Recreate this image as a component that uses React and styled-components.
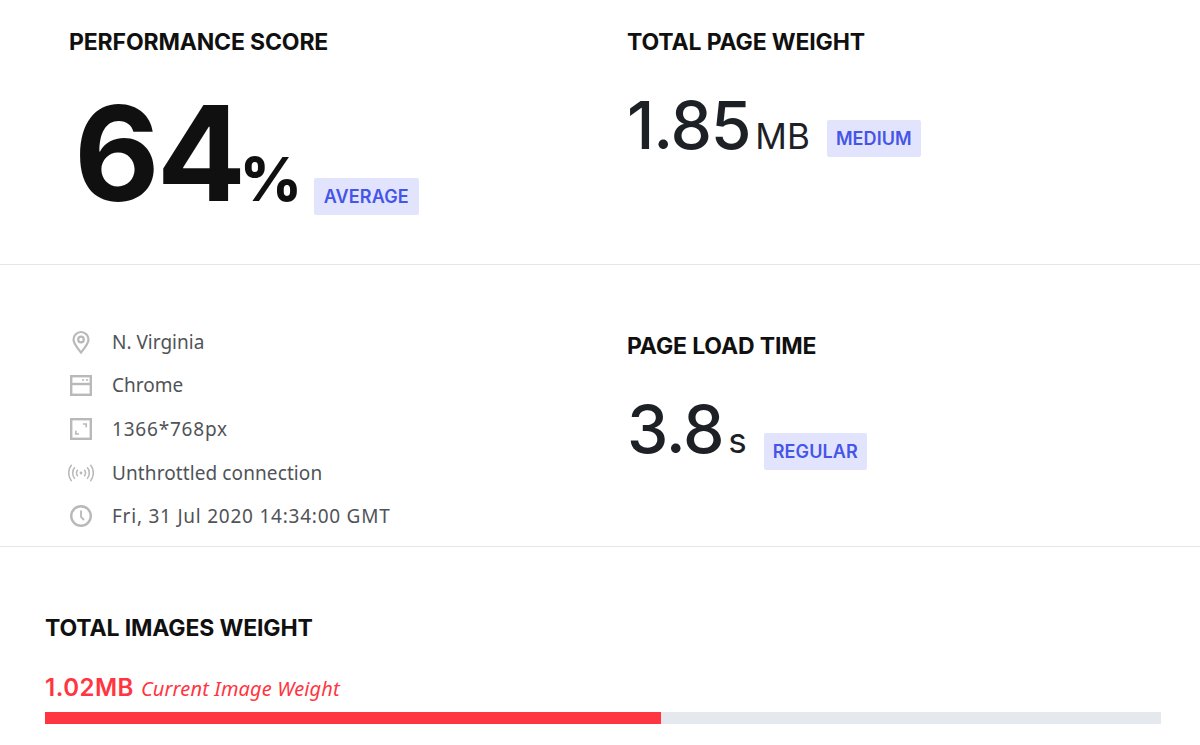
import React from 'react';
import styled, { createGlobalStyle } from 'styled-components';

const GlobalStyle = createGlobalStyle`
  html, body {
    margin: 0;
    padding: 0;
    background: #fff;
  }
  body {
    font-family: "Noto Sans", "Liberation Sans", sans-serif;
    overflow: hidden;
  }
`;

const COLORS = {
  HEADING: '#101010',
  VALUE: '#1d2126',
  ICON: '#b9b9b9',
  TEXT: '#505357',
  RED: '#ff3541',
  TRACK: '#e5e8ec',
  BADGE_BG: '#e2e4fd',
  BADGE_TEXT: '#4555e8',
};

const Page = styled.div`
  width: 1200px;
  height: 745px;
  overflow: hidden;
`;

const Row = styled.section`
  display: grid;
  grid-template-columns: 627px 1fr;
  height: ${(p) => p.$height}px;
  box-sizing: border-box;
  border-bottom: 1px solid #e4e6e8;
`;

const Cell = styled.div`
  padding: ${(p) => p.$top}px 0 0 ${(p) => p.$left || 0}px;
`;

const Title = styled.h2`
  margin: 0;
  font-family: Inter, "Liberation Sans", sans-serif;
  font-weight: 700;
  font-size: 23px;
  line-height: 28px;
  letter-spacing: -0.15px;
  color: ${COLORS.HEADING};
  white-space: nowrap;
`;

const Metric = styled.div`
  display: flex;
  align-items: flex-end;
  margin-top: ${(p) => p.$top}px;
  margin-left: ${(p) => p.$shift || 0}px;
  font-family: Inter, "Liberation Sans", sans-serif;
  color: ${COLORS.VALUE};
`;

const ValueGroup = styled.span`
  display: flex;
  align-items: baseline;
`;

const BigValue = styled.span`
  font-weight: 700;
  font-size: 132px;
  line-height: 114px;
  letter-spacing: -3px;
  color: ${COLORS.HEADING};
`;

const BigUnit = styled.span`
  font-weight: 800;
  font-size: 60px;
  margin-left: -3px;
  letter-spacing: -2px;
  color: ${COLORS.HEADING};
`;

const Value = styled.span`
  font-weight: 500;
  font-size: 66px;
  line-height: ${(p) => p.$line}px;
  letter-spacing: -1.2px;
`;

const Unit = styled.span`
  font-weight: 400;
  font-size: 35px;
  margin-left: 5px;
`;

const Badge = styled.span`
  display: inline-flex;
  align-items: center;
  height: 37px;
  padding: 0 ${(p) => p.$pad || 9}px;
  margin-left: ${(p) => p.$gap}px;
  border-radius: 2px;
  background: ${COLORS.BADGE_BG};
  color: ${COLORS.BADGE_TEXT};
  font-family: Inter, "Liberation Sans", sans-serif;
  font-weight: 600;
  font-size: 18px;
  letter-spacing: 0.1px;
`;

const InfoList = styled.ul`
  list-style: none;
  margin: 0;
  padding: 0;
  display: flex;
  flex-direction: column;
  gap: 14px;
`;

const InfoItem = styled.li`
  display: flex;
  align-items: center;
  height: 29.6px;
  font-size: 19px;
  letter-spacing: ${(p) => p.$track || 0}px;
  color: ${COLORS.TEXT};
  white-space: nowrap;
`;

const IconSlot = styled.span`
  display: flex;
  justify-content: center;
  align-items: center;
  width: 26px;
  margin-right: 18px;
  color: ${COLORS.ICON};
`;

const ImagesRow = styled.section`
  padding: 67px 39px 0 45px;
`;

const WeightLine = styled.div`
  display: flex;
  align-items: baseline;
  margin-top: 31px;
  color: ${COLORS.RED};
`;

const WeightValue = styled.span`
  font-family: Inter, "Liberation Sans", sans-serif;
  font-weight: 600;
  font-size: 24px;
  letter-spacing: 0.5px;
`;

const WeightLabel = styled.em`
  margin-left: 7px;
  font-size: 20px;
  letter-spacing: 0.15px;
`;

const Track = styled.div`
  height: 12px;
  margin-top: 10px;
  background: ${COLORS.TRACK};
`;

const TrackFill = styled.div`
  height: 100%;
  background: ${COLORS.RED};
`;

const PinIcon = () => (
  <svg width="20" height="24" viewBox="0 0 20 24" fill="none" stroke="currentColor" strokeWidth="2.2">
    <path d="M10 22.5 C6 17.5 2.5 13.5 2.5 9.5 a7.5 7.5 0 0 1 15 0 C17.5 13.5 14 17.5 10 22.5 Z" />
    <circle cx="10" cy="9.5" r="2.8" />
  </svg>
);

const WindowIcon = () => (
  <svg width="22" height="21" viewBox="0 0 22 21" fill="none" stroke="currentColor" strokeWidth="2.4">
    <rect x="1.2" y="1.2" width="19.6" height="18.6" />
    <path d="M1 9h20" />
    <path d="M12 5h2.2M16 5h2.2" strokeWidth="1.6" />
  </svg>
);

const ExpandIcon = () => (
  <svg width="22" height="22" viewBox="0 0 22 22" fill="none" stroke="currentColor" strokeWidth="2.4">
    <rect x="1.2" y="1.2" width="19.6" height="19.6" />
    <path d="M13 6h3.2v3.2M5.8 12.8V16H9" strokeWidth="1.7" />
  </svg>
);

const SignalIcon = () => (
  <svg width="26" height="20" viewBox="0 0 26 20" fill="none" stroke="currentColor" strokeWidth="1.5">
    <circle cx="13" cy="10" r="1.4" fill="currentColor" stroke="none" />
    <path d="M9.8 6.8a5 5 0 0 0 0 6.4M16.2 6.8a5 5 0 0 1 0 6.4" />
    <path d="M6.8 4.2a9 9 0 0 0 0 11.6M19.2 4.2a9 9 0 0 1 0 11.6" />
    <path d="M3.6 1.8a13 13 0 0 0 0 16.4M22.4 1.8a13 13 0 0 1 0 16.4" />
  </svg>
);

const ClockIcon = () => (
  <svg width="22" height="22" viewBox="0 0 22 22" fill="none" stroke="currentColor" strokeWidth="2.4">
    <circle cx="11" cy="11" r="9.8" />
    <path d="M11 5.5V12l3 3" strokeWidth="1.8" />
  </svg>
);

// track: Noto digits run narrower than the reference font, so digit-heavy rows get some spacing
const INFO_ITEMS = [
  { label: 'N. Virginia', icon: <PinIcon /> },
  { label: 'Chrome', icon: <WindowIcon /> },
  { label: '1366*768px', icon: <ExpandIcon />, track: 0.8 },
  { label: 'Unthrottled connection', icon: <SignalIcon />, track: 0.1 },
  { label: 'Fri, 31 Jul 2020 14:34:00 GMT', icon: <ClockIcon />, track: 0.76 },
];

export default function App() {
  return (
    <Page>
      <GlobalStyle />
      <Row $height={265}>
        <Cell $top={28} $left={69}>
          <Title>PERFORMANCE SCORE</Title>
          <Metric $top={40} $shift={5}>
            <ValueGroup>
              <BigValue>64</BigValue>
              <BigUnit>%</BigUnit>
            </ValueGroup>
            <Badge $gap={14} $pad={10}>AVERAGE</Badge>
          </Metric>
        </Cell>
        <Cell $top={28}>
          <Title>TOTAL PAGE WEIGHT</Title>
          <Metric $top={40}>
            <ValueGroup>
              <Value $line={58}>1.85</Value>
              <Unit>MB</Unit>
            </ValueGroup>
            <Badge $gap={17}>MEDIUM</Badge>
          </Metric>
        </Cell>
      </Row>
      <Row $height={282}>
        <Cell $top={62} $left={68}>
          <InfoList>
            {INFO_ITEMS.map((item) => (
              <InfoItem key={item.label} $track={item.track}>
                <IconSlot>{item.icon}</IconSlot>
                {item.label}
              </InfoItem>
            ))}
          </InfoList>
        </Cell>
        <Cell $top={67}>
          <Title>PAGE LOAD TIME</Title>
          <Metric $top={28}>
            <ValueGroup>
              <Value $line={82}>3.8</Value>
              <Unit>s</Unit>
            </ValueGroup>
            <Badge $gap={17}>REGULAR</Badge>
          </Metric>
        </Cell>
      </Row>
      <ImagesRow>
        <Title>TOTAL IMAGES WEIGHT</Title>
        <WeightLine>
          <WeightValue>1.02MB</WeightValue>
          <WeightLabel>Current Image Weight</WeightLabel>
        </WeightLine>
        <Track>
          <TrackFill style={{ width: `${(616 / 1116) * 100}%` }} />
        </Track>
      </ImagesRow>
    </Page>
  );
}
